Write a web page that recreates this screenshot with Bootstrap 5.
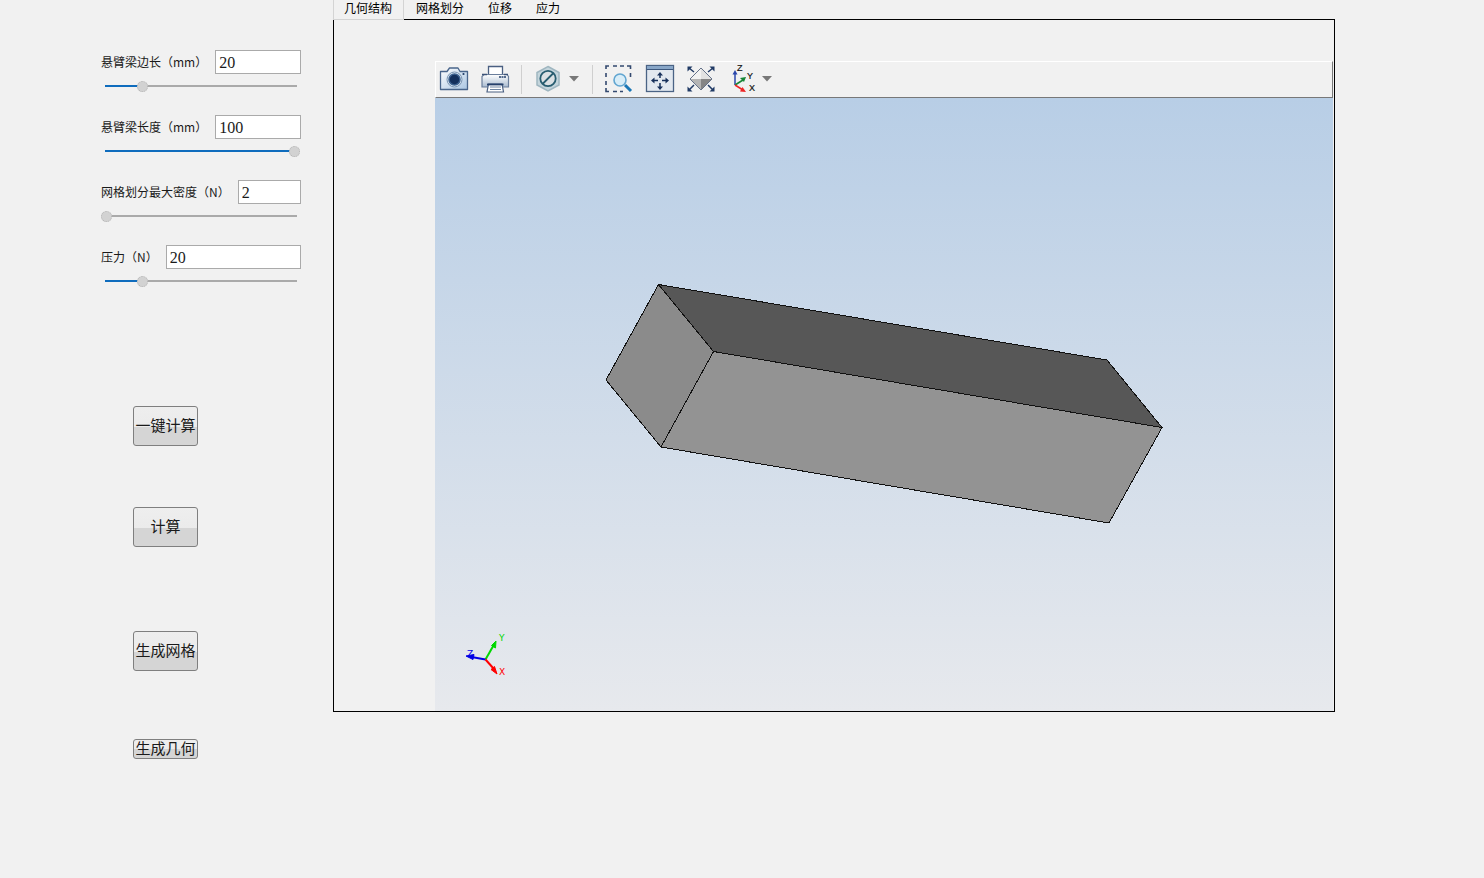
<!DOCTYPE html>
<html lang="zh-CN">
<head>
<meta charset="utf-8">
<meta name="viewport" content="width=device-width, initial-scale=1">
<title>悬臂梁仿真</title>
<link href="https://cdn.jsdelivr.net/npm/bootstrap@5.3.0/dist/css/bootstrap.min.css" rel="stylesheet">
<style>
  body { background: #f1f1f1; color: #000; font: 12px/16px "Liberation Sans", "Noto Sans CJK SC", sans-serif; }
  .side-panel { width: 333px; padding: 50px 32px 0 101px; }
  .param { height: 65px; }
  .param label, .action, .view-tabs .nav-link { font-family: "Noto Sans CJK SC", sans-serif; }
  .param label { white-space: nowrap; color: #1a1a1a; }
  .param-value { height: 24px; padding: 2px 3px 0; border: 1px solid #aaa; border-radius: 0; background: #fff; color: #1a1a1a; font: 16px/20px "Liberation Serif", serif; min-width: 0; }
  .param-slider { -webkit-appearance: none; appearance: none; display: block; width: 199px; height: 12px; margin: 6px 0 0; outline-offset: 2px;
    background: linear-gradient(#0f6cbd, #0f6cbd) 4px 5px / calc(var(--fill) * 188px) 2px no-repeat, linear-gradient(#aaa, #aaa) 4px 5px / 192px 2px no-repeat; }
  .param-slider::-webkit-slider-thumb { -webkit-appearance: none; width: 11px; height: 11px; border-radius: 50%; background: #d2d2d2; border: 1px dotted #b4b4b4; }
  .actions { padding: 96px 0 0 32px; }
  .action { width: 65px; height: 40px; padding: 0 0 2px; border: 1px solid #7f7f7f; border-radius: 3px; color: #1a1a1a; font-size: 15px; line-height: 16px; white-space: nowrap; background: linear-gradient(#eee 0, #ebebeb 52%, #d5d5d5 52%, #d5d5d5 100%); }
  .action-short { height: 20px; }
  .gap-small { margin-bottom: 61px; }
  .gap-large { margin-bottom: 84px; }
  .gap-medium { margin-bottom: 68px; }
  .workspace { padding-right: 149px; }
  .view-tabs { height: 19px; border: 0; }
  .view-tabs .nav-link { height: 20px; padding: 0 12px; border: 0; border-radius: 0; color: #000; background: none; line-height: 16px; }
  .view-tabs .nav-link.active { padding: 0 11px 0 10px; border: 1px solid #d4d4d4; border-top: 0; background: #f1f1f1; color: #000; }
  .view-tabs .nav-item { position: relative; }
  .view-frame { border: 1px solid #000; padding: 41px 1px 0 101px; }
  .tool-strip { height: 37px; border: 1px solid #787878; border-top-color: #fff; border-left-color: #fff; padding: 0 0 1px 3px; }
  .tool { padding: 0; border: 0; background: none; width: 32px; height: 32px; display: block; }
  .tool svg, .scene { display: block; }
  .tool-arrow { width: 12px; margin-left: 2px; }
  .tool-rule { width: 1px; height: 29px; margin: 0 12px 0 10px; background: #cfcfcf; }
  .tool-arrow + .tool-rule { margin-left: 12px; }
  .scene { width: 100%; height: auto; background: linear-gradient(#b8cee6, #e7e9ed); }
</style>
</head>
<body>
<div class="d-flex align-items-start">
  <aside class="side-panel flex-shrink-0">
    <form>
      <div class="param">
        <div class="d-flex align-items-center gap-2"><label for="side">悬臂梁边长（mm）</label><input class="param-value flex-fill w-25" id="side" type="text" value="20"></div>
        <input class="param-slider" type="range" aria-label="悬臂梁边长" min="1" max="100" value="20" style="--fill:.192">
      </div>
      <div class="param">
        <div class="d-flex align-items-center gap-2"><label for="length">悬臂梁长度（mm）</label><input class="param-value flex-fill w-25" id="length" type="text" value="100"></div>
        <input class="param-slider" type="range" aria-label="悬臂梁长度" min="1" max="100" value="100" style="--fill:1">
      </div>
      <div class="param">
        <div class="d-flex align-items-center gap-2"><label for="density">网格划分最大密度（N）</label><input class="param-value flex-fill w-25" id="density" type="text" value="2"></div>
        <input class="param-slider" type="range" aria-label="网格划分最大密度" min="2" max="10" value="2" style="--fill:0">
      </div>
      <div class="param">
        <div class="d-flex align-items-center gap-2"><label for="pressure">压力（N）</label><input class="param-value flex-fill w-25" id="pressure" type="text" value="20"></div>
        <input class="param-slider" type="range" aria-label="压力" min="1" max="100" value="20" style="--fill:.192">
      </div>
    </form>
    <div class="actions d-flex flex-column align-items-start">
      <button type="button" class="action gap-small">一键计算</button>
      <button type="button" class="action gap-large">计算</button>
      <button type="button" class="action gap-medium">生成网格</button>
      <button type="button" class="action action-short">生成几何</button>
    </div>
  </aside>

  <main class="workspace flex-grow-1">
    <ul class="nav nav-tabs view-tabs flex-nowrap">
      <li class="nav-item"><a class="nav-link active" href="#geometry" aria-current="page">几何结构</a></li>
      <li class="nav-item"><a class="nav-link" href="#mesh">网格划分</a></li>
      <li class="nav-item"><a class="nav-link" href="#displacement">位移</a></li>
      <li class="nav-item"><a class="nav-link" href="#stress">应力</a></li>
    </ul>
    <section class="view-frame" id="geometry">
      <div class="tool-strip d-flex align-items-center">
        <button type="button" class="tool" aria-label="截图">
          <svg width="32" height="32" viewBox="0 0 32 32">
            <defs><linearGradient id="cam" x1="0" y1="0" x2="1" y2="1"><stop offset="0" stop-color="#fff"/><stop offset="1" stop-color="#a9c5e2"/></linearGradient></defs>
            <path d="M1.500 8.500H8L10.500 5h8.500L21 8.500h7.500v18h-27z" fill="url(#cam)" stroke="#49658b" stroke-width="1.300" stroke-linejoin="round"/>
            <circle cx="15.500" cy="16.500" r="7.500" fill="#dbe8f4" stroke="#7892b0"/><circle cx="15.500" cy="16.500" r="5.500" fill="#14305c" stroke="#3d618e" stroke-width="1.500"/><circle cx="24.500" cy="11" r="1.100" fill="#203d68"/>
          </svg>
        </button>
        <button type="button" class="tool ms-2" aria-label="打印">
          <svg width="32" height="32" viewBox="0 0 32 32">
            <defs><linearGradient id="prn" x1="0" y1="0" x2="0" y2="1"><stop offset="0" stop-color="#fff"/><stop offset="1" stop-color="#a9bbd0"/></linearGradient></defs>
            <path d="M9.500 12V3.500h14V12" fill="#fff" stroke="#4b6082" stroke-width="1.300"/>
            <path d="M5 11.500h23l1.500 2v10.500H3V13.500z" fill="url(#prn)" stroke="#6a7e9b" stroke-width="1.200"/>
            <path d="M3 11.500h5M25 11.500h4" stroke="#3c5378" stroke-width="1.300"/><path d="M20 14h7" stroke="#25406b" stroke-width="1.500" stroke-dasharray="2 .5"/>
            <path d="M9.500 21h13.500l1.500 8H8z" fill="#fff" stroke="#4b6082" stroke-width="1.200"/><path d="M8 21.500h16.500" stroke="#25406b" stroke-width="1.800"/><path d="M11 24h11M11 26.500h11" stroke="#7086a3"/>
          </svg>
        </button>
        <span class="tool-rule"></span>
        <button type="button" class="tool" aria-label="隐藏对象">
          <svg width="32" height="32" viewBox="0 0 32 32">
            <path d="M14 3.500 25 9.500v12.500L14 28 3 22V9.500z" fill="#c4d5dc" stroke="#9fb6c0" stroke-width="1.500"/>
            <circle cx="14" cy="15.500" r="7.700" fill="#dbe1e4" stroke="#285d70" stroke-width="1.800"/><path d="m8.500 21 11-11" stroke="#285d70" stroke-width="1.800"/>
          </svg>
        </button>
        <button type="button" class="tool tool-arrow" aria-label="隐藏选项"><svg width="12" height="32" viewBox="0 0 12 32"><path d="M1 13h10l-5 5.500z" fill="#787878"/></svg></button>
        <span class="tool-rule"></span>
        <button type="button" class="tool" aria-label="框选缩放">
          <svg width="32" height="32" viewBox="0 0 32 32">
            <path d="M1 6V3h3M8 3h4M15 3h4M22 3h3.500v3M1 10v4M1 18v4M1 25v3.500h3M8 28.500h4M15 28.500h3M25.500 10v4" fill="none" stroke="#33496f" stroke-width="1.600"/>
            <circle cx="15" cy="17" r="6" fill="#d8edf8" stroke="#62a6d1" stroke-width="1.600"/><path d="m20 22 6 6" stroke="#1976b5" stroke-width="3"/>
          </svg>
        </button>
        <button type="button" class="tool ms-2" aria-label="缩放到全部">
          <svg width="32" height="32" viewBox="0 0 32 32">
            <rect x="1.500" y="2.500" width="27" height="26" fill="#e2e8ef" stroke="#4a6385" stroke-width="1.300"/><path d="M2 3h26v3H2z" fill="#89a7c8"/><path d="M2 6.500h26" stroke="#3d587e"/>
            <path d="M15 11v4M15 20v5M8 17.500h5M17 17.500h5" stroke="#17305b" stroke-width="1.500"/><path d="m15 9 3 3.500h-6zM15 27l3-3.500h-6zM6 17.500l3.500-3v6zM24 17.500l-3.500-3v6z" fill="#17305b"/>
          </svg>
        </button>
        <button type="button" class="tool ms-2" aria-label="正视图">
          <svg width="32" height="32" viewBox="0 0 32 32">
            <path d="m4 5 5 4M28 5l-5 4M4 27l5-5M28 27l-5-5" stroke="#203a65" stroke-width="1.500"/>
            <path d="M2.500 3.500h5l-5 5zM29.500 3.500h-5l5 5zM2.500 28.500h5l-5-5zM29.500 28.500h-5l5-5z" fill="#203a65"/>
            <path d="M16 5v11H5z" fill="#f2f2f2"/><path d="M16 5v11h11z" fill="#e2e2e2"/><path d="M5 16h11v11z" fill="#b5b5b5"/><path d="M27 16H16v11z" fill="#858585"/><path d="m16 5 11 11-11 11L5 16z" fill="none" stroke="#66738a"/>
          </svg>
        </button>
        <button type="button" class="tool ms-2" aria-label="视图方向">
          <svg width="32" height="32" viewBox="0 0 32 32" font-family="Liberation Sans" font-size="9">
            <path d="M10 22V10" stroke="#2b47ab" stroke-width="1.500"/><path d="m10 7 2.500 4.500h-5z" fill="#2b47ab"/>
            <path d="m10 22 8-5" stroke="#178636" stroke-width="1.500"/><path d="m21 14-2 5-4-4z" fill="#178636"/>
            <path d="m10 22 8 5" stroke="#ed2525" stroke-width="1.500"/><path d="m21 29-6-.5 2.500-4.500z" fill="#ed2525"/>
            <text x="12" y="8" fill="#111" stroke="#111" stroke-width=".2">Z</text><text x="22" y="16" fill="#111" stroke="#111" stroke-width=".2">Y</text><text x="24" y="28" fill="#111" stroke="#111" stroke-width=".2">X</text>
          </svg>
        </button>
        <button type="button" class="tool tool-arrow ms-1" aria-label="视图选项"><svg width="12" height="32" viewBox="0 0 12 32"><path d="M1 13h10l-5 5.500z" fill="#787878"/></svg></button>
      </div>
      <svg class="scene" viewBox="0 0 898 613" role="img" aria-label="悬臂梁几何模型">
        <g stroke="#111" stroke-width="1" stroke-linejoin="round" shape-rendering="crispEdges">
          <path d="M223.500 186.500 672 262 727 329.500 278.500 253.500z" fill="#575757"/>
          <path d="M223.500 186.500 278.500 253.500 226 349 171 282z" fill="#8b8b8b"/>
          <path d="M278.500 253.500 727 329.500 674 425 226 349z" fill="#939393"/>
        </g>
        <g stroke-width="2" font-family="DejaVu Sans" font-size="9">
          <path d="m50.500 561.500 8-14" stroke="#00d800"/><path d="m61 543-.5 7-4-2.500z" fill="#00d800" stroke="#00d800" stroke-width="1"/>
          <path d="m50.500 561.500-14-2.500" stroke="#0000e6"/><path d="m31 558 8-1.500-1 5z" fill="#0000e6" stroke="#0000e6" stroke-width="1"/>
          <path d="m50.500 561.500 8 9" stroke="#f00"/><path d="m62 576-6-4.500 3.500-3z" fill="#f00" stroke="#f00" stroke-width="1"/>
          <text x="64" y="543" fill="#00d800">Y</text><text x="32" y="559" fill="#0000e6">Z</text><text x="64" y="577" fill="#f00">X</text>
        </g>
      </svg>
    </section>
  </main>
</div>
<script src="https://cdn.jsdelivr.net/npm/bootstrap@5.3.0/dist/js/bootstrap.bundle.min.js"></script>
</body>
</html>
